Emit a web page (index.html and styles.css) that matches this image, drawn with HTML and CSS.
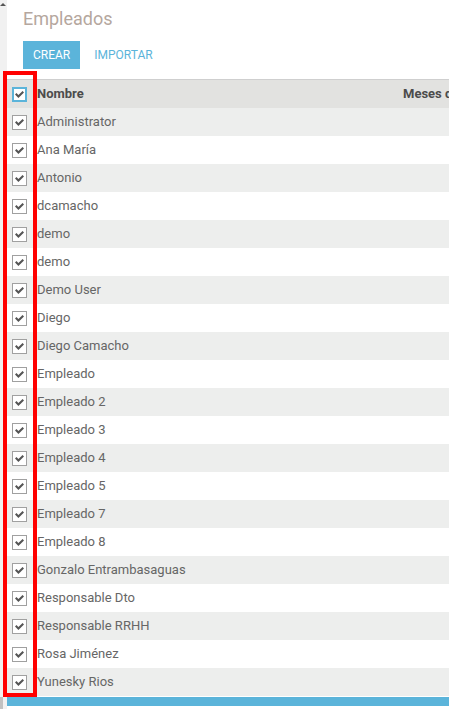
FILE: index.html
```html
<!DOCTYPE html>
<html lang="es">
<head>
<meta charset="utf-8">
<link rel="stylesheet" href="styles.css">
</head>
<body>
<div class="page">
  <div class="strip"><span class="arrow"></span><span class="thumb"></span></div>
  <div class="main">
    <h1 class="title">Empleados</h1>
    <div class="actions">
      <button class="btn-primary">CREAR</button>
      <button class="btn-link">IMPORTAR</button>
    </div>
    <div class="table">
      <div class="row head">
        <span class="cell-check"><span class="cb focus"></span></span>
        <span class="cell-name">Nombre</span>
        <span class="cell-meses">Meses de antigüedad</span>
      </div>
      <div class="row"><span class="cell-check"><span class="cb"></span></span><span class="cell-name">Administrator</span></div>
      <div class="row"><span class="cell-check"><span class="cb"></span></span><span class="cell-name">Ana María</span></div>
      <div class="row"><span class="cell-check"><span class="cb"></span></span><span class="cell-name">Antonio</span></div>
      <div class="row"><span class="cell-check"><span class="cb"></span></span><span class="cell-name">dcamacho</span></div>
      <div class="row"><span class="cell-check"><span class="cb"></span></span><span class="cell-name">demo</span></div>
      <div class="row"><span class="cell-check"><span class="cb"></span></span><span class="cell-name">demo</span></div>
      <div class="row"><span class="cell-check"><span class="cb"></span></span><span class="cell-name">Demo User</span></div>
      <div class="row"><span class="cell-check"><span class="cb"></span></span><span class="cell-name">Diego</span></div>
      <div class="row"><span class="cell-check"><span class="cb"></span></span><span class="cell-name">Diego Camacho</span></div>
      <div class="row"><span class="cell-check"><span class="cb"></span></span><span class="cell-name">Empleado</span></div>
      <div class="row"><span class="cell-check"><span class="cb"></span></span><span class="cell-name">Empleado 2</span></div>
      <div class="row"><span class="cell-check"><span class="cb"></span></span><span class="cell-name">Empleado 3</span></div>
      <div class="row"><span class="cell-check"><span class="cb"></span></span><span class="cell-name">Empleado 4</span></div>
      <div class="row"><span class="cell-check"><span class="cb"></span></span><span class="cell-name">Empleado 5</span></div>
      <div class="row"><span class="cell-check"><span class="cb"></span></span><span class="cell-name">Empleado 7</span></div>
      <div class="row"><span class="cell-check"><span class="cb"></span></span><span class="cell-name">Empleado 8</span></div>
      <div class="row"><span class="cell-check"><span class="cb"></span></span><span class="cell-name">Gonzalo Entrambasaguas</span></div>
      <div class="row"><span class="cell-check"><span class="cb"></span></span><span class="cell-name">Responsable Dto</span></div>
      <div class="row"><span class="cell-check"><span class="cb"></span></span><span class="cell-name">Responsable RRHH</span></div>
      <div class="row"><span class="cell-check"><span class="cb"></span></span><span class="cell-name">Rosa Jiménez</span></div>
      <div class="row"><span class="cell-check"><span class="cb"></span></span><span class="cell-name">Yunesky Rios</span></div>
      <div class="footer-bar"></div>
    </div>
  </div>
  <div class="highlight"></div>
</div>
</body>
</html>
```
FILE: styles.css
```css
html, body {
  margin: 0;
  padding: 0;
  background: #ffffff;
  font-family: Roboto, "Noto Sans", sans-serif;
  overflow: hidden;
}
.page {
  position: relative;
  display: flex;
  width: 449px;
  height: 709px;
  overflow: hidden;
}
.strip {
  position: relative;
  flex: 0 0 7px;
  background: #f1f1f1;
}
.arrow {
  position: absolute;
  left: 0;
  top: 3px;
  width: 0;
  height: 0;
  border-left: 3px solid transparent;
  border-right: 3px solid transparent;
  border-bottom: 3px solid #555;
}
.thumb {
  position: absolute;
  left: 0;
  bottom: 0;
  width: 3px;
  height: 12px;
  background: #c1c1c1;
}
.main {
  flex: 1;
  min-width: 0;
  display: flex;
  flex-direction: column;
  background: #fff;
}
.title {
  margin: 0;
  padding: 8px 0 0 16px;
  height: 25px;
  font-size: 18px;
  font-weight: 400;
  line-height: 22px;
  color: #b5a79e;
}
.actions {
  display: flex;
  align-items: center;
  padding: 8px 0 0 16px;
  height: 28px;
}
.btn-primary {
  height: 28px;
  padding: 0 10px;
  border: none;
  background: #5bb4da;
  color: #fff;
  font-family: inherit;
  font-size: 12px;
}
.btn-link {
  height: 28px;
  padding: 0 14px;
  border: none;
  background: transparent;
  color: #5bb4da;
  font-family: inherit;
  font-size: 12px;
}
.table {
  margin-top: 10px;
  width: 520px;
  border-top: 1px solid #cfcfcf;
  display: flex;
  flex-direction: column;
}
.row {
  display: flex;
  align-items: center;
  height: 28px;
  line-height: 26px;
  font-size: 13px;
  color: #666;
  background: #fff;
}
.row:nth-child(even) {
  background: #edeeed;
}
.row.head {
  background: #e2e2e0;
  color: #4c4c4c;
  font-weight: 700;
}
.cell-check {
  flex: 0 0 30px;
  display: flex;
  align-items: center;
  padding-left: 5px;
  box-sizing: border-box;
}
.cell-name {
  flex: 0 0 366px;
  white-space: nowrap;
}
.cell-meses {
  white-space: nowrap;
}
.cb {
  width: 13px;
  height: 13px;
  border: 1px solid #a0a0a0;
  background: #fff;
  display: flex;
  align-items: center;
  justify-content: center;
}
.cb::after {
  content: "";
  display: block;
  width: 9px;
  height: 7px;
  margin-top: 1px;
  background: #555;
  clip-path: polygon(0 50%, 16% 30%, 38% 58%, 84% 0, 100% 22%, 38% 100%);
}
.cb.focus {
  border: 2px solid #5bb4da;
  width: 11px;
  height: 11px;
}
.footer-bar {
  height: 9px;
  margin-top: 1px;
  background: #5bb4da;
}
.highlight {
  position: absolute;
  left: 3px;
  top: 71px;
  width: 26px;
  height: 618px;
  border: 4px solid #ff0000;
}
```
